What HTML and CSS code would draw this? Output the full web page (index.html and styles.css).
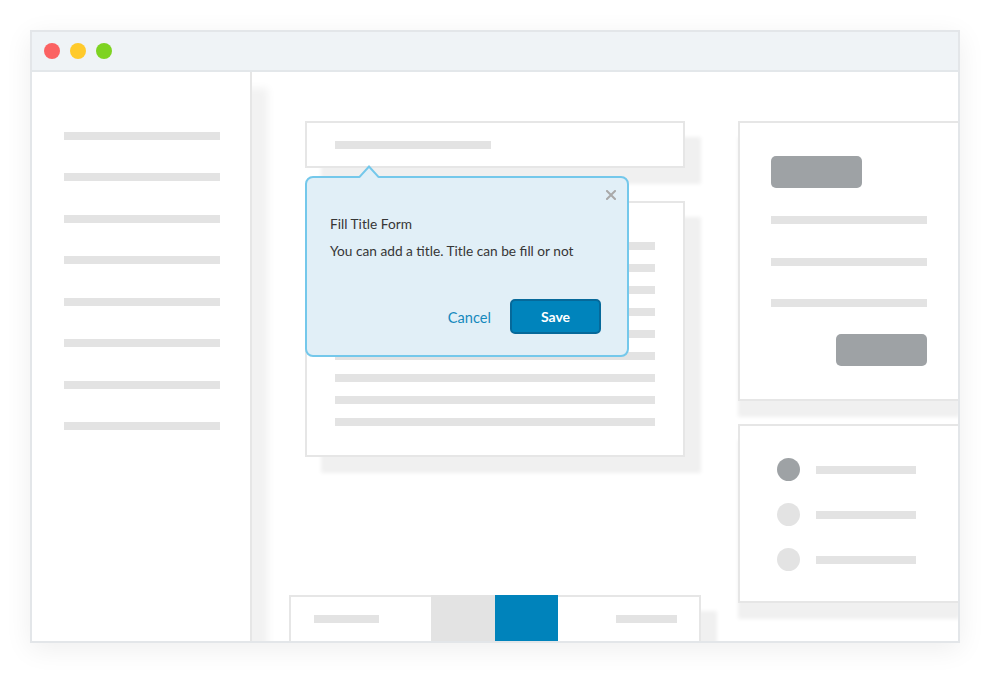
FILE: index.html
```html
<!DOCTYPE html>
<html>
<head>
<meta charset="utf-8">
<link rel="stylesheet" href="styles.css">
</head>
<body>
<div class="stage">
  <div class="window">
    <div class="titlebar">
      <span class="dot red"></span>
      <span class="dot yellow"></span>
      <span class="dot green"></span>
    </div>
    <div class="body">
      <aside class="sidebar">
        <div class="line"></div>
        <div class="line"></div>
        <div class="line"></div>
        <div class="line"></div>
        <div class="line"></div>
        <div class="line"></div>
        <div class="line"></div>
        <div class="line"></div>
      </aside>
      <main class="main">
        <div class="left-col">
          <div class="card title-card">
            <div class="line short"></div>
          </div>
          <div class="card text-card">
            <div class="line"></div>
            <div class="line"></div>
            <div class="line"></div>
            <div class="line"></div>
            <div class="line"></div>
            <div class="line"></div>
            <div class="line"></div>
            <div class="line"></div>
            <div class="line"></div>
          </div>
          <div class="tabbar">
            <div class="seg seg-first"><div class="line tab-line"></div></div>
            <div class="seg seg-gray"></div>
            <div class="seg seg-blue"></div>
            <div class="seg seg-last"><div class="line tab-line2"></div></div>
          </div>

          <div class="popover">
            <svg class="popover-arrow" width="20" height="13" viewBox="0 0 20 13">
              <polygon points="0,13 10,1.5 20,13" fill="#e1eff7"/>
              <polyline points="0,12.5 10,1.5 20,12.5" fill="none" stroke="#74c8eb" stroke-width="2"/>
            </svg>
            <svg class="popover-close" width="10" height="10" viewBox="0 0 10 10">
              <path d="M1 1 L9 9 M9 1 L1 9" stroke="#a9a9a9" stroke-width="2" stroke-linecap="square"/>
            </svg>
            <div class="popover-title">Fill Title Form</div>
            <div class="popover-text">You can add a title. Title can be fill or not</div>
            <div class="popover-actions">
              <span class="btn-cancel">Cancel</span>
              <span class="btn-save">Save</span>
            </div>
          </div>
        </div>

        <div class="right-col">
          <div class="card form-card">
            <div class="pill"></div>
            <div class="line"></div>
            <div class="line"></div>
            <div class="line"></div>
            <div class="pill pill-right"></div>
          </div>
          <div class="card list-card">
            <div class="row"><span class="circle dark"></span><span class="line"></span></div>
            <div class="row"><span class="circle"></span><span class="line"></span></div>
            <div class="row"><span class="circle"></span><span class="line"></span></div>
          </div>
        </div>
      </main>
    </div>
  </div>
</div>
</body>
</html>
```

FILE: styles.css
```css
* { box-sizing: border-box; }

html, body {
  margin: 0;
  padding: 0;
  background: #ffffff;
  font-family: Lato, "Open Sans", Arial, sans-serif;
}

.stage {
  width: 990px;
  height: 674px;
  padding: 30px 0 0 30px;
}

.window {
  width: 930px;
  height: 613px;
  border: 2px solid #e3e6e9;
  background: #ffffff;
  box-shadow: 0 6px 26px rgba(0, 0, 0, 0.07);
  display: flex;
  flex-direction: column;
  overflow: hidden;
}

.titlebar {
  height: 38px;
  flex-shrink: 0;
  background: #eff3f6;
  border-bottom: 2px solid #e3e7ea;
  box-sizing: content-box;
  display: flex;
  align-items: center;
  gap: 10px;
  padding-left: 12px;
}

.dot {
  width: 16px;
  height: 16px;
  border-radius: 50%;
  display: block;
}
.dot.red { background: #fb6262; }
.dot.yellow { background: #ffca2b; }
.dot.green { background: #7ed321; }

.body {
  flex: 1;
  display: flex;
  min-height: 0;
}

.sidebar {
  position: relative;
  z-index: 1;
  width: 220px;
  flex-shrink: 0;
  background: #ffffff;
  border-right: 2px solid #e6e6e6;
  box-shadow: 16px 16px 8px #f2f2f2;
  padding: 59.5px 0 0 32px;
  display: flex;
  flex-direction: column;
  gap: 33.5px;
}

.line {
  display: block;
  height: 8px;
  flex-shrink: 0;
  background: #e3e3e3;
}

.sidebar .line { width: 156px; }

.main {
  flex: 1;
  min-width: 0;
  overflow: hidden;
  background: #ffffff;
  display: flex;
  padding: 49px 0 0 37px;
}

.left-col {
  position: relative;
  width: 412px;
  flex-shrink: 0;
  display: flex;
  flex-direction: column;
  align-items: center;
}

.card {
  flex-shrink: 0;
  background: #ffffff;
  border: 2px solid #e6e6e6;
  box-shadow: 16px 16px 4px #f0f0f0;
}

.title-card {
  width: 380px;
  height: 47px;
  padding: 18px 28px 0;
}
.title-card .short { width: 156px; }

.text-card {
  width: 380px;
  height: 256px;
  margin-top: 33px;
  padding: 39px 28px 0;
  display: flex;
  flex-direction: column;
  gap: 14px;
}

.tabbar {
  width: 412px;
  height: 60px;
  margin-top: 138px;
  display: flex;
  box-shadow: 16px 16px 4px #f0f0f0;
  flex-shrink: 0;
}

.seg { height: 100%; }
.seg-first {
  width: 142px;
  background: #ffffff;
  border-top: 2px solid #e6e6e6;
  border-left: 2px solid #e6e6e6;
  padding: 18px 0 0 23px;
}
.seg-gray { width: 64px; background: #e3e3e3; }
.seg-blue { width: 63px; background: #0083bb; }
.seg-last {
  width: 143px;
  background: #ffffff;
  border-top: 2px solid #e6e6e6;
  border-right: 2px solid #e6e6e6;
  padding: 18px 0 0 58px;
}
.tab-line { width: 65px; }
.tab-line2 { width: 61px; }

.popover {
  position: absolute;
  left: 16px;
  top: 55px;
  width: 324px;
  height: 181px;
  background: #e1eff7;
  border: 2px solid #74c8eb;
  border-radius: 8px;
  padding: 37px 26px 0 23px;
  color: #363636;
  z-index: 2;
}

.popover-arrow {
  position: absolute;
  left: 52px;
  top: -13px;
  display: block;
}

.popover-close {
  position: absolute;
  right: 11px;
  top: 12px;
  display: block;
}

.popover-title {
  font-size: 13.7px;
  line-height: 18px;
}

.popover-text {
  font-size: 13.7px;
  line-height: 18px;
  margin-top: 9px;
}

.popover-actions {
  margin-top: 39px;
  display: flex;
  justify-content: flex-end;
  align-items: center;
  gap: 19px;
}

.btn-cancel {
  font-size: 14.6px;
  color: #1589bd;
  padding-top: 1px;
}

.btn-save {
  width: 91px;
  height: 35px;
  background: #0084bc;
  border: 2px solid #06699a;
  border-radius: 5px;
  color: #ffffff;
  font-weight: bold;
  font-size: 14px;
  display: flex;
  align-items: center;
  justify-content: center;
}

.right-col {
  width: 222px;
  flex-shrink: 0;
  margin-left: 37px;
  display: flex;
  flex-direction: column;
  gap: 23px;
}

.right-col .card { box-shadow: 0 16px 4px #f0f0f0; }

.form-card {
  height: 280px;
  padding: 33px 31px 0;
  display: flex;
  flex-direction: column;
}

.pill {
  width: 91px;
  height: 32px;
  flex-shrink: 0;
  border-radius: 5px;
  background: #9ea2a5;
  margin-bottom: 28px;
}

.form-card .line { width: 156px; margin-bottom: 33.5px; }
.form-card .line:nth-of-type(4) { margin-bottom: 27px; }

.pill-right {
  align-self: flex-start;
  margin: 0 0 0 65px;
}

.list-card {
  height: 179px;
  padding: 32px 0 0 37px;
  display: flex;
  flex-direction: column;
  gap: 22px;
}

.row {
  display: flex;
  align-items: center;
  gap: 16px;
  height: 23px;
  flex-shrink: 0;
}

.circle {
  width: 23px;
  height: 23px;
  border-radius: 50%;
  background: #e3e3e3;
  display: block;
  flex-shrink: 0;
}
.circle.dark { background: #9ea2a5; }

.row .line { width: 100px; }
```
